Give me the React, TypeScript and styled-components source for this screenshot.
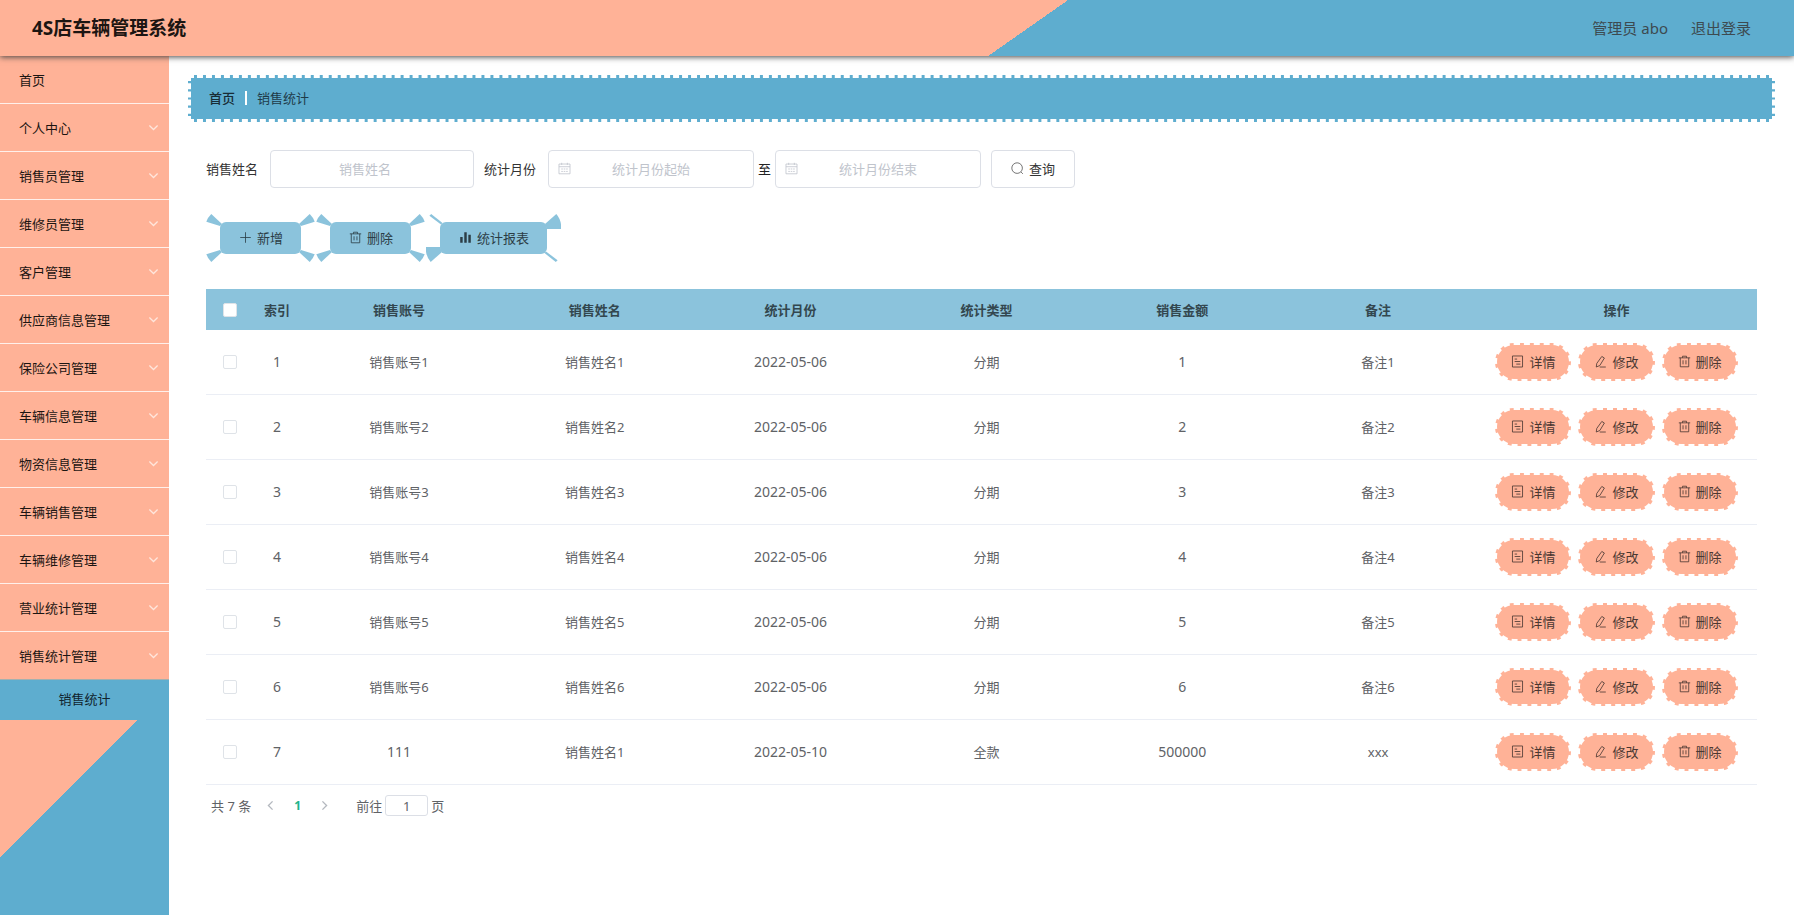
import React from 'react';
import styled, { createGlobalStyle } from 'styled-components';

const SALMON = '#ffb297';
const BLUE = '#5eadcf';
const SKY = '#8bc3dc';

const GlobalStyle = createGlobalStyle`
  *, *::before, *::after { box-sizing: border-box; }
  html, body, #root { margin: 0; height: 100%; }
  body {
    background: #fff;
    color: #333;
    font-family: "Noto Sans", "Noto Sans CJK SC", sans-serif;
    font-size: 13px;
    line-height: 20px;
  }
  button, input { font-family: inherit; }
  a { color: inherit; text-decoration: none; }
`;

const Page = styled.div`
  display: flex;
  flex-direction: column;
  min-height: 100%;
`;

const Header = styled.header`
  position: relative;
  z-index: 1;
  display: flex;
  align-items: center;
  justify-content: space-between;
  height: 56px;
  padding: 0 43px 0 32px;
  background: linear-gradient(145deg, ${SALMON} 57%, ${BLUE} 57%);
  box-shadow: 0 1px 6px #444;
`;

const Title = styled.h1`
  margin: 0;
  color: #1c1512;
  font-size: 19px;
  font-weight: 700;
  line-height: 28px;
`;

const Account = styled.div`
  display: flex;
  gap: 23px;
  color: #3d4a50;
  font-size: 15px;
`;

const Body = styled.div`
  display: flex;
  flex: 1;
`;

const Sidebar = styled.nav`
  flex: 0 0 169px;
  background: linear-gradient(135deg, ${SALMON} 78%, ${BLUE} 78%);
`;

const Menu = styled.ul`
  margin: 0;
  padding: 0;
  list-style: none;
`;

const MenuLink = styled.a<{ $last?: boolean }>`
  display: flex;
  align-items: center;
  justify-content: space-between;
  height: 48px;
  padding: 0 10px 0 19px;
  border-bottom: 1px solid ${p => (p.$last ? '#a5b0ae' : '#fff0ea')};
  color: #1c1512;
`;

const SubLink = styled.a`
  display: flex;
  align-items: center;
  justify-content: center;
  height: 40px;
  padding-bottom: 2px;
  background: ${BLUE};
  color: #10242e;
`;

const Main = styled.main`
  flex: 1;
  min-width: 0;
  padding: 19px 19px 0;
`;

const Breadcrumb = styled.nav`
  display: flex;
  align-items: center;
  gap: 10px;
  height: 47px;
  padding: 0 18px 2px;
  border: 3px dashed #fff;
  background: ${BLUE};
  color: #1e3b49;
`;

const Home = styled.a`
  color: #182c36;
  font-weight: 500;
`;

const Bar = styled.span`
  width: 2px;
  height: 14px;
  background: #fff;
`;

const Content = styled.div`
  padding: 28px 18px 0;
`;

const SearchForm = styled.form`
  display: flex;
  align-items: center;
  gap: 10px;
`;

const Field = styled.div`
  display: flex;
  align-items: center;
  gap: 12px;
`;

const Range = styled.div`
  display: flex;
  align-items: center;
  gap: 4px;
  color: #222;
`;

const InputWrap = styled.span`
  position: relative;
  display: flex;
  color: #c0c4cc;
  svg { position: absolute; left: 10px; top: 12px; }
`;

const TextInput = styled.input<{ $w: number; $clearable?: boolean }>`
  width: ${p => p.$w}px;
  height: 38px;
  padding: 0 ${p => (p.$clearable ? 24 : 10)}px 1px 10px;
  border: 1px solid #dcdfe6;
  border-radius: 4px;
  background: #fff;
  color: #606266;
  font-size: 13px;
  text-align: center;
  &::placeholder { color: #c0c4cc; opacity: 1; }
`;

const SearchButton = styled.button`
  display: flex;
  align-items: center;
  gap: 5px;
  height: 38px;
  padding: 0 19px 2px;
  border: 1px solid #dcdfe6;
  border-radius: 4px;
  background: #fff;
  color: #333;
  font-size: 13px;
  svg { color: #555; }
`;

const Toolbar = styled.div`
  display: flex;
  gap: 29px;
  margin: 34px 14px 35px;
`;

const ToolButton = styled.button`
  position: relative;
  display: flex;
  align-items: center;
  gap: 5px;
  height: 32px;
  padding: 0 18px 2px 19px;
  border: 0;
  border-radius: 6px;
  background: ${SKY};
  color: #2b3d46;
  font-size: 13px;
`;

type CornerName = 'tl' | 'tr' | 'bl' | 'br';

const CornerMark = styled.svg<{ $at: CornerName }>`
  position: absolute;
  ${p => (p.$at[0] === 't' ? 'top' : 'bottom')}: -14px;
  ${p => (p.$at[1] === 'l' ? 'left' : 'right')}: -14px;
  transform: scale(${p => (p.$at[1] === 'l' ? 1 : -1)}, ${p => (p.$at[0] === 't' ? 1 : -1)});
  fill: ${SKY};
`;

const Table = styled.table`
  width: 100%;
  border-collapse: separate;
  border-spacing: 0;
  table-layout: fixed;
  color: #606266;
  text-align: center;
`;

const HeadCell = styled.th<{ $w?: number }>`
  width: ${p => (p.$w ? `${p.$w}px` : 'auto')};
  height: 41px;
  padding: 0;
  background: ${SKY};
  color: #33474f;
  font-weight: 700;
`;

const Cell = styled.td<{ $num?: boolean }>`
  height: 65px;
  padding: 0;
  border-bottom: 1px solid #ebeef5;
  font-size: ${p => (p.$num ? 14 : 13)}px;
`;

const Check = styled.input`
  appearance: none;
  display: block;
  width: 14px;
  height: 14px;
  margin: 0 auto;
  border: 1px solid #dfe3e8;
  border-radius: 2px;
  background: #fff;
`;

const Actions = styled.div`
  display: flex;
  justify-content: center;
  gap: 7px;
`;

const Pill = styled.button`
  display: flex;
  align-items: center;
  gap: 5px;
  height: 38px;
  padding: 0 14px 2px 14px;
  border: 2px dashed #fff;
  border-radius: 20px;
  background: ${SALMON};
  color: #4a3832;
  font-size: 13px;
`;

const Pagination = styled.nav`
  display: flex;
  align-items: center;
  padding: 10px 5px;
  color: #606266;
`;

const PageButton = styled.button<{ $current?: boolean }>`
  display: flex;
  align-items: center;
  justify-content: center;
  width: 27px;
  height: 20px;
  padding: 0;
  border: 0;
  background: none;
  color: ${p => (p.$current ? '#21b38a' : '#b4b8bf')};
  font-size: 12px;
  font-weight: 700;
`;

const Pages = styled.div`
  display: flex;
  margin: 0 18px 0 6px;
`;

const Jump = styled.label`
  display: flex;
  align-items: center;
  gap: 3px;
`;

const JumpInput = styled.input`
  width: 43px;
  height: 21px;
  padding: 0;
  border: 1px solid #dcdfe6;
  border-radius: 3px;
  color: #606266;
  font-size: 13px;
  text-align: center;
`;

type IconName = 'plus' | 'trash' | 'chart' | 'search' | 'calendar' | 'doc' | 'edit' | 'down' | 'prev' | 'next';

const shapes: Record<IconName, React.ReactNode> = {
  plus: <path d="M8 1.5v13M1.5 8h13" />,
  trash: <path d="M1 3.5h14M5.5 3.5v-2h5v2M2.8 3.5v11h10.4v-11M6.2 6.5v5M9.8 6.5v5" />,
  chart: <path d="M3 7.5v7M8 1.5v13M13 4.5v10" strokeWidth="3" />,
  search: <path d="M12.4 12.4l2.2 2.2M14 7.5a6.5 6.5 0 1 1-13 0a6.5 6.5 0 0 1 13 0z" />,
  calendar: (
    <>
      <path d="M1.2 2.5h13.6v12H1.2zM1.2 5.8h13.6M4.5 1v2.6M11.5 1v2.6" />
      <path d="M4 8.6h2M7 8.6h2M10 8.6h2M4 11.6h2M7 11.6h2M10 11.6h2" />
    </>
  ),
  doc: <path d="M1.8 1.2h12.4v13.6H1.8zM4.5 5h3M4.5 8h7M6.5 11.2h5" />,
  edit: <path d="M7 14.8h7.5M9.6 1.8l3.2 1.9-5.6 9.2-4.4 1.9.6-4.4z" />,
  down: <path d="M2 5l6 6 6-6" />,
  prev: <path d="M11 2L5 8l6 6" />,
  next: <path d="M5 2l6 6-6 6" />,
};

const Icon = ({ name, size = 13, weight = 1 }: { name: IconName; size?: number; weight?: number }) => (
  <svg width={size} height={size} viewBox="0 0 16 16" fill="none" stroke="currentColor" strokeWidth={weight} aria-hidden="true">
    {shapes[name]}
  </svg>
);

const wedges = {
  medium: 'M5.3 6L16 16L14 18L.3 13.7A20 20 0 0 1 5.3 6Z',
  thin: 'M5.2 6L16.5 15L15 16.5L3.4 7.8Z',
  wide: 'M4.7 6L16 16L14 21L0 21A20 20 0 0 1 4.7 6Z',
};

type WedgeName = keyof typeof wedges;

const Corner = ({ at, wedge }: { at: CornerName; wedge: WedgeName }) => (
  <CornerMark $at={at} width="22" height="22" viewBox="0 0 22 22" aria-hidden="true">
    <path d={wedges[wedge]} />
  </CornerMark>
);

const Tool = ({ icon, label, falling = 'medium', rising = 'medium' }: {
  icon: IconName; label: string; falling?: WedgeName; rising?: WedgeName;
}) => (
  <ToolButton type="button">
    <Corner at="tl" wedge={falling} />
    <Corner at="br" wedge={falling} />
    <Corner at="tr" wedge={rising} />
    <Corner at="bl" wedge={rising} />
    <Icon name={icon} />
    {label}
  </ToolButton>
);

const Chevron = styled.span`
  display: flex;
  color: #ffe6dc;
`;

const groups = [
  '个人中心', '销售员管理', '维修员管理', '客户管理', '供应商信息管理', '保险公司管理',
  '车辆信息管理', '物资信息管理', '车辆销售管理', '车辆维修管理', '营业统计管理', '销售统计管理',
];

const columns = ['销售账号', '销售姓名', '统计月份', '统计类型', '销售金额', '备注'];

const rows = [
  ...[1, 2, 3, 4, 5, 6].map(n => ({
    account: `销售账号${n}`, name: `销售姓名${n}`, date: '2022-05-06', type: '分期', amount: `${n}`, note: `备注${n}`,
  })),
  { account: '111', name: '销售姓名1', date: '2022-05-10', type: '全款', amount: '500000', note: 'xxx' },
];

export default function App() {
  return (
    <>
      <GlobalStyle />
      <Page>
        <Header>
          <Title>4S店车辆管理系统</Title>
          <Account>
            <span>管理员 abo</span>
            <a href="#logout">退出登录</a>
          </Account>
        </Header>
        <Body>
          <Sidebar aria-label="主菜单">
            <Menu>
              <li><MenuLink href="#home">首页</MenuLink></li>
              {groups.map((g, i) => (
                <li key={g}>
                  <MenuLink href={`#group-${i}`} $last={i === groups.length - 1}>
                    {g}
                    <Chevron><Icon name="down" size={11} weight={1.8} /></Chevron>
                  </MenuLink>
                </li>
              ))}
              <li><SubLink href="#sales">销售统计</SubLink></li>
            </Menu>
          </Sidebar>
          <Main>
            <Breadcrumb aria-label="路径">
              <Home href="#home">首页</Home>
              <Bar />
              <span>销售统计</span>
            </Breadcrumb>
            <Content>
              <SearchForm onSubmit={e => e.preventDefault()}>
                <Field>
                  <label htmlFor="name">销售姓名</label>
                  <TextInput id="name" $w={204} $clearable placeholder="销售姓名" />
                </Field>
                <Field>
                  <label htmlFor="from">统计月份</label>
                  <Range>
                    <InputWrap>
                      <TextInput id="from" $w={206} placeholder="统计月份起始" />
                      <Icon name="calendar" />
                    </InputWrap>
                    <label htmlFor="to">至</label>
                    <InputWrap>
                      <TextInput id="to" $w={206} placeholder="统计月份结束" />
                      <Icon name="calendar" />
                    </InputWrap>
                  </Range>
                </Field>
                <SearchButton type="submit"><Icon name="search" />查询</SearchButton>
              </SearchForm>
              <Toolbar>
                <Tool icon="plus" label="新增" />
                <Tool icon="trash" label="删除" />
                <Tool icon="chart" label="统计报表" falling="thin" rising="wide" />
              </Toolbar>
              <Table>
                <thead>
                  <tr>
                    <HeadCell $w={47}><Check type="checkbox" aria-label="全选" /></HeadCell>
                    <HeadCell $w={48}>索引</HeadCell>
                    {columns.map(c => <HeadCell key={c}>{c}</HeadCell>)}
                    <HeadCell $w={281}>操作</HeadCell>
                  </tr>
                </thead>
                <tbody>
                  {rows.map((r, i) => (
                    <tr key={i}>
                      <Cell><Check type="checkbox" aria-label={`选择第${i + 1}行`} /></Cell>
                      <Cell $num>{i + 1}</Cell>
                      <Cell $num={r.account === '111'}>{r.account}</Cell>
                      <Cell>{r.name}</Cell>
                      <Cell $num>{r.date}</Cell>
                      <Cell>{r.type}</Cell>
                      <Cell $num>{r.amount}</Cell>
                      <Cell>{r.note}</Cell>
                      <Cell>
                        <Actions>
                          <Pill type="button"><Icon name="doc" />详情</Pill>
                          <Pill type="button"><Icon name="edit" />修改</Pill>
                          <Pill type="button"><Icon name="trash" />删除</Pill>
                        </Actions>
                      </Cell>
                    </tr>
                  ))}
                </tbody>
              </Table>
              <Pagination aria-label="分页">
                <span>共 7 条</span>
                <Pages>
                  <PageButton type="button" aria-label="上一页"><Icon name="prev" size={11} weight={2} /></PageButton>
                  <PageButton type="button" $current>1</PageButton>
                  <PageButton type="button" aria-label="下一页"><Icon name="next" size={11} weight={2} /></PageButton>
                </Pages>
                <Jump>
                  前往
                  <JumpInput defaultValue="1" />
                  页
                </Jump>
              </Pagination>
            </Content>
          </Main>
        </Body>
      </Page>
    </>
  );
}
